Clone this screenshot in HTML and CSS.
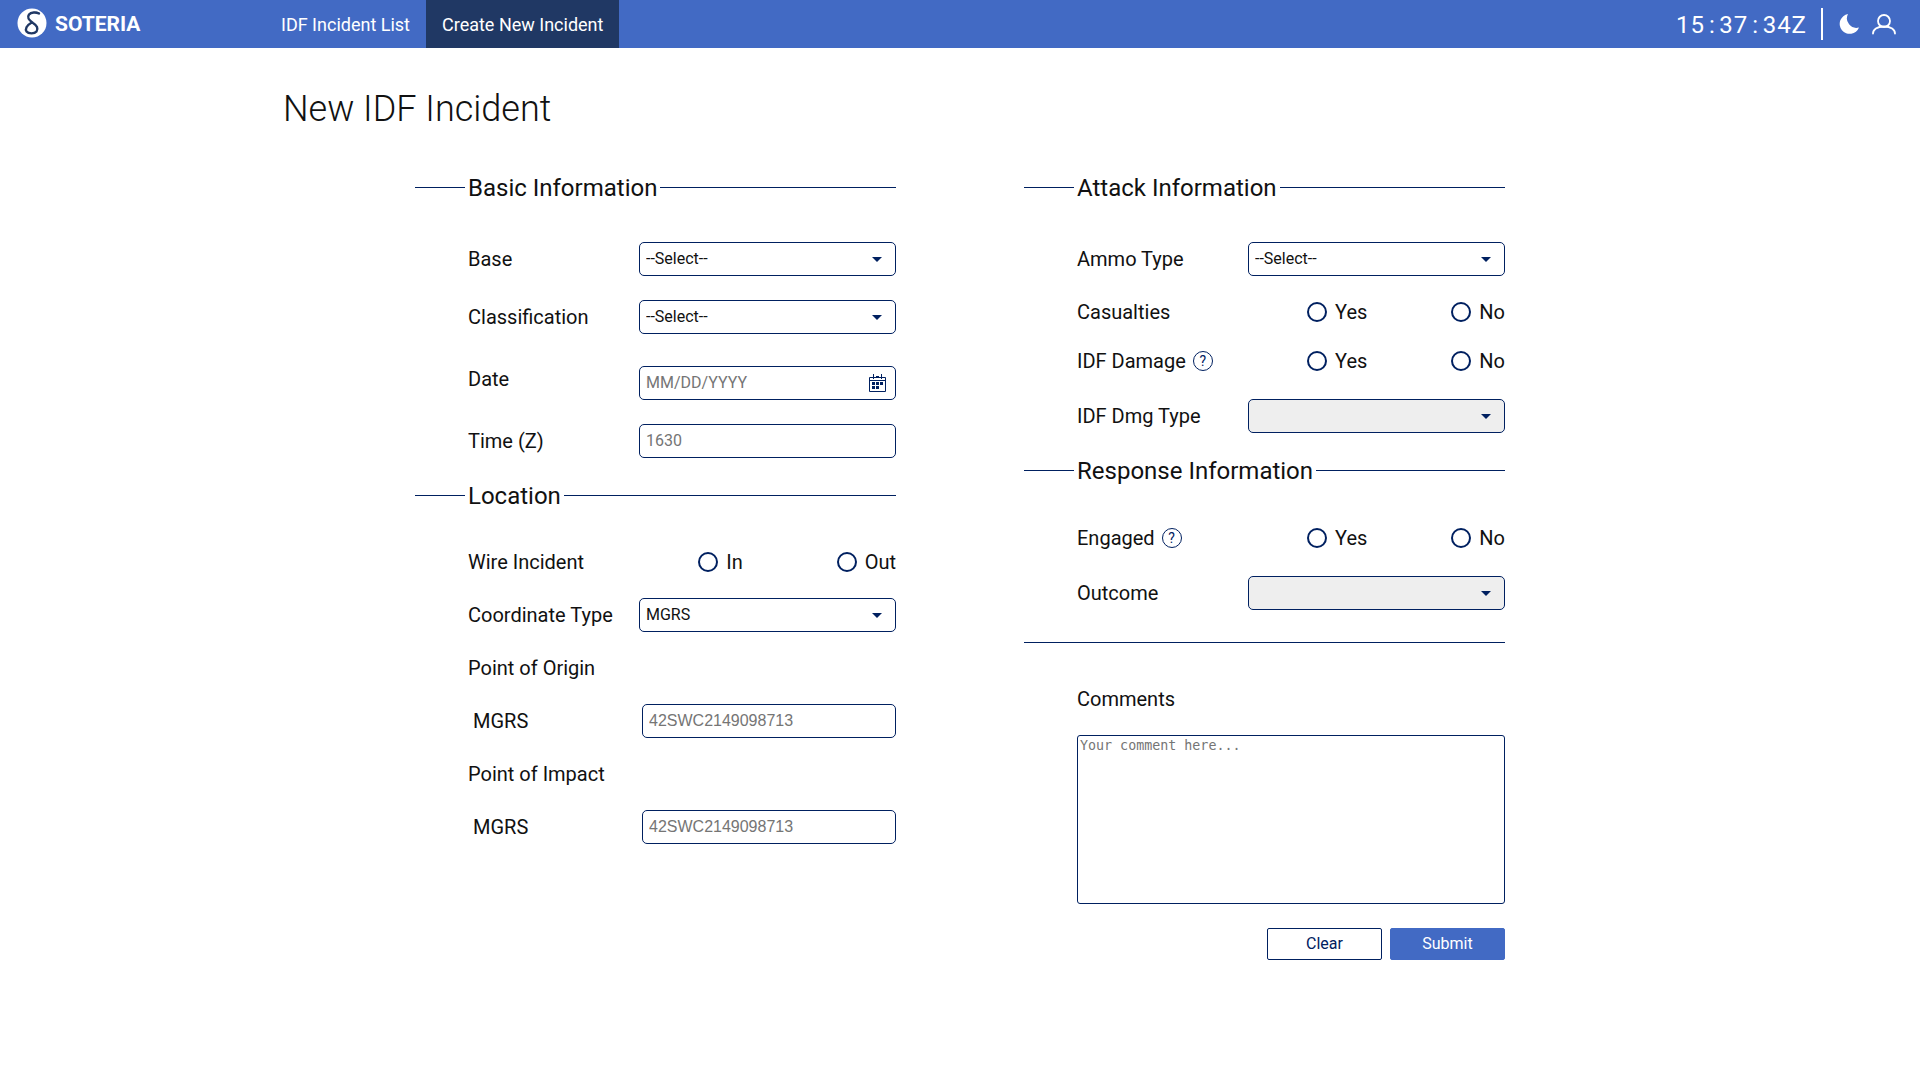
FILE: index.html
```html
<!DOCTYPE html>
<html lang="en">
<head>
  <meta charset="UTF-8" />
  <title>Soteria - New IDF Incident</title>
  <link rel="stylesheet" href="styles.css">
</head>
<body>
  <header class="topbar">
    <div class="brand">
      <svg class="brand-logo" viewBox="0 0 30 30" width="30" height="30">
        <circle cx="15" cy="15" r="14.5" fill="#fff"/>
        <path d="M22 5.500c-3-1.500-8-1.500-10 1-2.500 3.500.5 6 4 8.500 4 2.500 5.500 5.500 3.500 8.500-2 2.500-8 2.500-10 0-1.500-2.500 0-6 4.500-8.500" fill="none" stroke="#203864" stroke-width="2.400" stroke-linecap="round"/>
        <path d="M13 6c3-2 7-2.500 10-.5" fill="none" stroke="#203864" stroke-width="1"/>
      </svg>
      <span class="brand-name">SOTERIA</span>
    </div>
    <nav class="nav">
      <a class="nav-link" href="#">IDF Incident List</a>
      <a class="nav-link active" href="#">Create New Incident</a>
    </nav>
    <div class="topbar-right">
      <span class="clock">15<span class="colon">:</span>37<span class="colon">:</span>34Z</span>
      <span class="topbar-sep"></span>
      <svg class="moon" viewBox="0 0 22 22" width="22" height="22">
        <path d="M10 1A10 10 0 1 0 21 14.500 9.500 9.500 0 0 1 10 1z" fill="#fff"/>
      </svg>
      <svg class="user" viewBox="0 0 26 22" width="26" height="22">
        <circle cx="13" cy="8" r="6" fill="none" stroke="#fff" stroke-width="1.800"/>
        <path d="M2 20.500c0-4 4-7 11-7s11 3 11 7" fill="none" stroke="#fff" stroke-width="1.800" stroke-linecap="round"/>
      </svg>
    </div>
  </header>

  <main class="page">
    <h1>New IDF Incident</h1>
    <form class="columns">
      <section class="column">
        <h2 class="section-title">Basic Information</h2>
        <div class="row first">
          <label>Base</label>
          <div class="select-wrap"><select><option>--Select--</option></select></div>
        </div>
        <div class="row gap-24">
          <label>Classification</label>
          <div class="select-wrap"><select><option>--Select--</option></select></div>
        </div>
        <div class="row gap-32">
          <label class="raised">Date</label>
          <div class="date-wrap">
            <input type="text" placeholder="MM/DD/YYYY">
            <svg class="calendar" viewBox="0 0 17 18" width="17" height="18">
              <path d="M.5 3.500h16v14H.5z" fill="none" stroke="#002060"/>
              <path d="M.5 6.500h16" stroke="#002060"/>
              <path d="M4.500 0v5M12.500 0v5M7 2.500h3" stroke="#002060"/>
              <path d="M3 8h3v3H3zM7 8h3v3H7zM11 8h3v3h-3zM3 12h3v3H3zM7 12h3v3H7z" fill="#002060"/>
            </svg>
          </div>
        </div>
        <div class="row gap-24">
          <label>Time (Z)</label>
          <input type="text" placeholder="1630">
        </div>

        <h2 class="section-title next">Location</h2>
        <div class="row gap-33">
          <label>Wire Incident</label>
          <div class="radios wide">
            <label class="radio"><input type="radio" name="wire">In</label>
            <label class="radio"><input type="radio" name="wire">Out</label>
          </div>
        </div>
        <div class="row">
          <label>Coordinate Type</label>
          <div class="select-wrap"><select><option>MGRS</option></select></div>
        </div>
        <div class="row">
          <label>Point of Origin</label>
        </div>
        <div class="row coord">
          <label>MGRS</label>
          <input class="coord-input" type="text" placeholder="42SWC2149098713">
        </div>
        <div class="row">
          <label>Point of Impact</label>
        </div>
        <div class="row coord">
          <label>MGRS</label>
          <input class="coord-input" type="text" placeholder="42SWC2149098713">
        </div>
      </section>

      <section class="column">
        <h2 class="section-title">Attack Information</h2>
        <div class="row first">
          <label>Ammo Type</label>
          <div class="select-wrap"><select><option>--Select--</option></select></div>
        </div>
        <div class="row">
          <label>Casualties</label>
          <div class="radios">
            <label class="radio"><input type="radio" name="casualties">Yes</label>
            <label class="radio"><input type="radio" name="casualties">No</label>
          </div>
        </div>
        <div class="row gap-15">
          <label>IDF Damage <span class="help">?</span></label>
          <div class="radios">
            <label class="radio"><input type="radio" name="damage">Yes</label>
            <label class="radio"><input type="radio" name="damage">No</label>
          </div>
        </div>
        <div class="row gap-21">
          <label>IDF Dmg Type</label>
          <div class="select-wrap"><select disabled><option></option></select></div>
        </div>

        <h2 class="section-title next">Response Information</h2>
        <div class="row gap-34">
          <label>Engaged <span class="help">?</span></label>
          <div class="radios">
            <label class="radio"><input type="radio" name="engaged">Yes</label>
            <label class="radio"><input type="radio" name="engaged">No</label>
          </div>
        </div>
        <div class="row gap-21">
          <label>Outcome</label>
          <div class="select-wrap"><select disabled><option></option></select></div>
        </div>

        <hr class="divider">

        <div class="comments">
          <label>Comments</label>
          <textarea placeholder="Your comment here..."></textarea>
          <div class="actions">
            <button type="button" class="btn">Clear</button>
            <button type="button" class="btn primary">Submit</button>
          </div>
        </div>
      </section>
    </form>
  </main>
</body>
</html>
```

FILE: styles.css
```css
* {
  box-sizing: border-box;
}
body {
  margin: 0;
  font-family: Roboto, "Liberation Sans", sans-serif;
  font-size: 20px;
  color: #111;
  background: #fff;
}
.topbar {
  display: flex;
  align-items: center;
  height: 48px;
  background: #426ac4;
  color: #fff;
}
.brand {
  display: flex;
  align-items: center;
  gap: 8px;
  width: 265px;
  padding-left: 17px;
}
.brand-logo {
  margin-top: -2px;
}
.brand-name {
  font-size: 21px;
  font-weight: 700;
}
.nav {
  display: flex;
  height: 100%;
}
.nav-link {
  display: flex;
  align-items: center;
  padding: 0 16px;
  color: #fff;
  text-decoration: none;
  font-size: 18px;
}
.nav-link.active {
  background: #203864;
}
.topbar-right {
  display: flex;
  align-items: center;
  margin-left: auto;
  padding-right: 23px;
}
.clock {
  margin-top: 2px;
  font-size: 24px;
  letter-spacing: 1px;
}
.colon {
  margin: 0 3.500px 0 4px;
}
.topbar-sep {
  width: 2px;
  height: 32px;
  margin: 0 15px 0 14px;
  background: #fff;
}
.moon {
  margin-right: 11px;
}
.page {
  width: 1354px;
  margin: 0 auto;
}
h1 {
  margin: 0;
  padding-top: 37px;
  height: 122px;
  font-size: 36px;
  font-weight: 300;
  line-height: 48px;
  color: #111;
}
.columns {
  display: grid;
  grid-template-columns: 481px 481px;
  justify-content: center;
  column-gap: 128px;
}
.section-title {
  display: flex;
  align-items: center;
  gap: 3px;
  height: 34px;
  margin: 0;
  padding-top: 2px;
  font-size: 24px;
  font-weight: 400;
}
.section-title::before {
  content: "";
  flex: none;
  width: 50px;
  height: 1px;
  margin-top: -2px;
  background: #002060;
}
.section-title::after {
  content: "";
  flex: 1;
  height: 1px;
  margin-top: -2px;
  background: #002060;
}
.section-title.next {
  margin-top: 20px;
}
.row {
  display: grid;
  grid-template-columns: 171px 257px;
  align-items: center;
  min-height: 34px;
  margin-top: 19px;
  margin-left: 53px;
}
.row.first {
  margin-top: 38px;
}
.row.gap-15 { margin-top: 15px; }
.row.gap-21 { margin-top: 21px; }
.row.gap-24 { margin-top: 24px; }
.row.gap-32 { margin-top: 32px; }
.row.gap-33 { margin-top: 33px; }
.row.gap-34 { margin-top: 34px; }
.row.coord {
  grid-template-columns: 174px 254px;
}
.row.coord label {
  padding-left: 5px;
}
.row > label {
  margin-top: -1px;
}
.row > label.raised {
  margin-top: -8px;
}
input[type="text"],
select {
  width: 100%;
  height: 34px;
  padding: 0 6px 2px;
  border: 1px solid #002060;
  border-radius: 5px;
  background: #fff;
  font-family: Roboto, sans-serif;
  font-size: 16px;
  color: #111;
  appearance: none;
}
input::placeholder {
  color: #757575;
}
input.coord-input[type="text"] {
  padding-bottom: 0;
  font-family: "Liberation Sans", sans-serif;
}
select:disabled {
  background: #eee;
  opacity: 1;
}
.select-wrap,
.date-wrap {
  position: relative;
}
.select-wrap::after {
  content: "";
  position: absolute;
  top: 15px;
  right: 14px;
  border-left: 5px solid transparent;
  border-right: 5px solid transparent;
  border-top: 5px solid #002060;
  pointer-events: none;
}
.calendar {
  position: absolute;
  top: 8px;
  right: 10px;
}
.radios {
  display: flex;
  justify-content: flex-end;
  gap: 84px;
}
.radios.wide {
  gap: 94px;
}
.radio {
  display: flex;
  align-items: center;
  gap: 8px;
}
.radio input {
  width: 20px;
  height: 20px;
  margin: 0;
  border: 2px solid #002060;
  border-radius: 50%;
  background: #fff;
  appearance: none;
}
.help {
  display: inline-block;
  width: 20px;
  height: 20px;
  margin-left: 2px;
  border: 1px solid #002060;
  border-radius: 50%;
  font-size: 14px;
  line-height: 18px;
  text-align: center;
  vertical-align: 2px;
  color: #002060;
}
.divider {
  height: 1px;
  margin: 32px 0 0;
  border: 0;
  background: #002060;
}
.comments {
  margin: 44px 0 0 53px;
}
.comments label {
  display: block;
  height: 24px;
  line-height: 24px;
}
textarea {
  display: block;
  width: 428px;
  height: 169px;
  margin-top: 24px;
  padding: 2px;
  border: 1px solid #002060;
  border-radius: 3px;
  font-family: "DejaVu Sans Mono", monospace;
  font-size: 13.333px;
  resize: none;
}
textarea::placeholder {
  color: #757575;
}
.actions {
  display: flex;
  justify-content: flex-end;
  gap: 8px;
  margin-top: 24px;
}
.btn {
  width: 115px;
  height: 32px;
  padding: 0 0 2px;
  border: 1px solid #002060;
  border-radius: 2px;
  background: #fff;
  font-family: Roboto, sans-serif;
  font-size: 16px;
  color: #002060;
}
.btn.primary {
  border-color: #426ac4;
  background: #426ac4;
  color: #fff;
}
```
